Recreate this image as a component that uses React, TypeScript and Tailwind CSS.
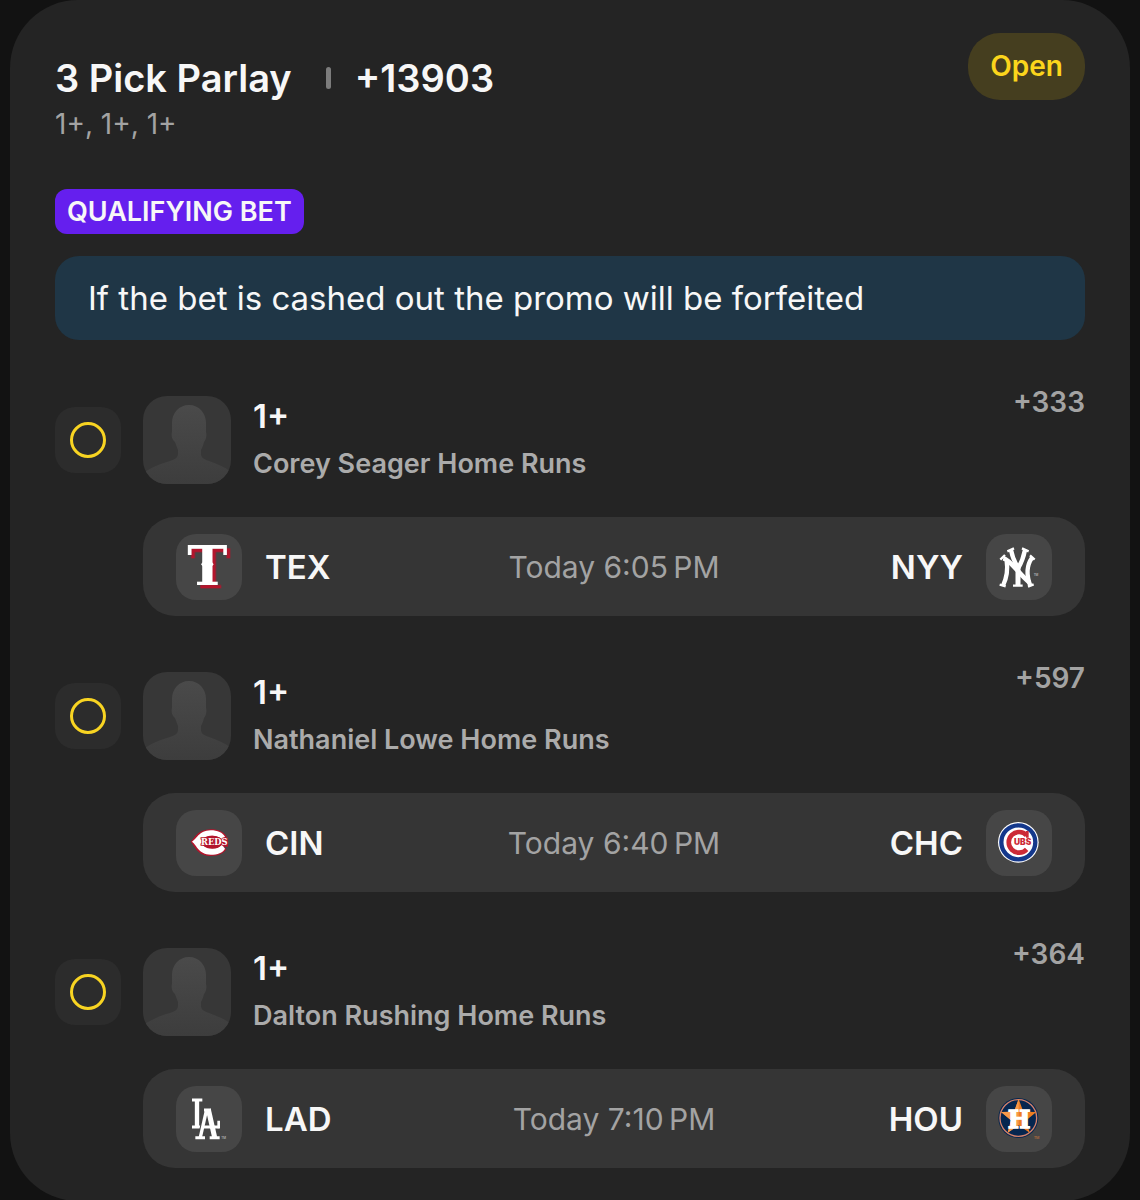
import type { ReactNode } from "react";

const serif = "DejaVu Serif, serif";

// each crest is drawn on a 198 unit tile
function Rangers() {
  return (
    <svg viewBox="19 25 198 198" className="h-full w-full" aria-label="Texas Rangers">
      <text
        x="113"
        y="178"
        fontFamily={serif}
        fontWeight="700"
        fontSize="162"
        textAnchor="middle"
        fill="#fff"
        className="drop-shadow-[10px_10px_0_#b3152c]"
      >
        T
      </text>
      <path d="M94 116l5-6h28l5 6-5 6H99z" fill="#fff" />
    </svg>
  );
}

function Yankees() {
  return (
    <svg viewBox="18 25 198 198" className="h-full w-full" aria-label="New York Yankees">
      <g fill="none" stroke="#fff" strokeWidth="13">
        <path d="M93 73q6 30 22 54q14-24 20-54" />
        <path d="M114 122v56" strokeWidth="15" />
        <path d="M70 98C92 104 118 146 148 170" strokeWidth="14" />
        <path d="M80 106q6 38-11 74" />
        <path d="M156 96q-24 34-5 84" />
      </g>
      <g fill="none" stroke="#fff" strokeWidth="7">
        <path d="M82 77l20-9M126 68l20 9" />
        <path d="M61 102l14-14M150 89l14 13" />
        <path d="M59 177l18 5M99 180h29M144 183l17-7" />
      </g>
      <text x="161" y="151" fontFamily="Inter, sans-serif" fontSize="9" fill="#ddd">TM</text>
    </svg>
  );
}

function Reds() {
  return (
    <svg viewBox="20 21 198 198" className="h-full w-full" aria-label="Cincinnati Reds">
      <path
        d="M64 116C78 104 84 80 124 79c24 0 40 8 48 22l-8 10h12v20h-12l7 8c-8 13-24 20-47 20-40-1-46-27-60-43z"
        fill="#b3152c"
      />
      <path
        d="M68 116c15-8 20-33 56-34 21 0 36 7 43 19l-9 11c-6-9-16-14-29-14-20 0-31 7-31 19s11 20 31 20c13 0 23-5 29-12l9 12c-7 12-22 18-43 18-36-1-41-28-56-39z"
        fill="#fff"
      />
      <ellipse cx="129" cy="117" rx="31" ry="19" fill="#b3152c" />
      <text
        x="135"
        y="127"
        fontFamily={serif}
        fontWeight="700"
        fontSize="25"
        textAnchor="middle"
        fill="#fff"
        stroke="#b3152c"
        strokeWidth="5"
        paintOrder="stroke"
      >
        REDS
      </text>
    </svg>
  );
}

function Cubs() {
  return (
    <svg viewBox="18 21 198 198" className="h-full w-full" aria-label="Chicago Cubs">
      <circle cx="115" cy="118" r="61" fill="#fff" />
      <circle cx="115" cy="118" r="51" fill="#fff" stroke="#14388c" strokeWidth="13" />
      <path d="M140 97a31 31 0 1 0 0 42" fill="none" stroke="#cc2a36" strokeWidth="14" />
      <path d="M138 84h8v20h-8z" fill="#cc2a36" />
      <rect x="99" y="106" width="56" height="24" fill="#fff" />
      <text x="128" y="127" fontFamily="Inter, sans-serif" fontWeight="900" fontSize="25" textAnchor="middle" fill="#cc2a36">
        UBS
      </text>
    </svg>
  );
}

function Dodgers() {
  return (
    <svg viewBox="19 20 198 198" className="h-full w-full" aria-label="Los Angeles Dodgers">
      <g fill="none" stroke="#fff">
        <path d="M82 60v82" strokeWidth="13" />
        <path d="M67 62h31M67 143h26" strokeWidth="9" />
      </g>
      {/* dark edge keeps the crossing strokes apart */}
      <g fill="none" stroke="#464646">
        <path d="M111 92L93 168" strokeWidth="16" />
        <path d="M116 92l18 76" strokeWidth="20" />
      </g>
      <g fill="none" stroke="#fff">
        <path d="M111 90L92 174" strokeWidth="10" />
        <path d="M116 90l19 84" strokeWidth="15" />
        <path d="M103 92h21" strokeWidth="9" />
        <path d="M98 143h52M77 175h29M120 175h30" strokeWidth="9" />
        <path d="M147 124v23" strokeWidth="8" />
      </g>
      <text x="155" y="178" fontFamily="Inter, sans-serif" fontSize="9" fill="#ddd">TM</text>
    </svg>
  );
}

function Astros() {
  return (
    <svg viewBox="18 20 198 198" className="h-full w-full" aria-label="Houston Astros">
      <circle cx="115" cy="116" r="60" fill="#06264f" />
      <circle cx="115" cy="116" r="55" fill="none" stroke="#d4816a" strokeWidth="4" />
      <path d="M116 59l14 38 39 1-30 25 10 37-33-22-33 22 10-37-30-25 39-1z" fill="#ee7d22" />
      <path d="M116 59v79l-33 22 10-37-30-25 39-1z" fill="#f79a4b" />
      <text
        x="117"
        y="147"
        fontFamily={serif}
        fontWeight="700"
        fontSize="72"
        textAnchor="middle"
        fill="#fff"
        stroke="#fff"
        strokeWidth="4"
      >
        H
      </text>
      <text x="161" y="178" fontFamily="Inter, sans-serif" fontSize="11" fill="#d97a3a">TM</text>
    </svg>
  );
}

function Avatar() {
  return (
    <svg viewBox="0 0 88 88" className="size-[88px] shrink-0 rounded-3xl bg-[#373737]" aria-hidden="true">
      <defs>
        <linearGradient id="person" x1="0" y1="0" x2="0" y2="1">
          <stop offset="0" stopColor="#4a4a4a" />
          <stop offset="1" stopColor="#3d3d3d" />
        </linearGradient>
      </defs>
      <path
        d="M46 9c10 0 17 8 17 18v9c1 3 0 8-2 10-1 4-2 6-3 8v4c0 3 2 5 8 7 8 3 16 6 22 11v12H0V77c8-5 16-9 27-12 6-2 8-4 8-7v-4l-3-8c-3-2-4-7-3-10v-9c0-10 7-18 17-18z"
        fill="url(#person)"
      />
    </svg>
  );
}

type Leg = {
  player: string;
  odds: string;
  time: string;
  away: string;
  awayLogo: ReactNode;
  home: string;
  homeLogo: ReactNode;
};

// narrow no-break space before PM
const legs: Leg[] = [
  {
    player: "Corey Seager",
    odds: "+333",
    time: "Today 6:05\u202fPM",
    away: "TEX",
    awayLogo: <Rangers />,
    home: "NYY",
    homeLogo: <Yankees />,
  },
  {
    player: "Nathaniel Lowe",
    odds: "+597",
    time: "Today 6:40\u202fPM",
    away: "CIN",
    awayLogo: <Reds />,
    home: "CHC",
    homeLogo: <Cubs />,
  },
  {
    player: "Dalton Rushing",
    odds: "+364",
    time: "Today 7:10\u202fPM",
    away: "LAD",
    awayLogo: <Dodgers />,
    home: "HOU",
    homeLogo: <Astros />,
  },
];

function TeamTile({ children }: { children: ReactNode }) {
  return <div className="size-[66px] shrink-0 overflow-hidden rounded-[20px] bg-[#464646]">{children}</div>;
}

function LegRow({ leg }: { leg: Leg }) {
  return (
    <li>
      <div className="flex items-center">
        <div className="flex size-[66px] shrink-0 items-center justify-center rounded-[20px] bg-[#2c2c2c]">
          <span className="size-9 rounded-full border-[3px] border-[#f8d422]"></span>
        </div>

        <div className="ml-[22px]">
          <Avatar />
        </div>

        <div className="ml-[22px] flex-1">
          <h2 className="text-[33px] leading-10 font-semibold text-[#f7f7f7]">1+</h2>
          <p className="mt-2 text-[27px] leading-10 font-semibold text-[#ababab]">{leg.player} Home Runs</p>
        </div>

        <p className="self-start text-[28px] leading-3 font-semibold text-[#a3a3a3]">{leg.odds}</p>
      </div>

      <div className="mt-[33px] ml-[88px] grid grid-cols-[1fr_auto_1fr] items-center rounded-[32px] bg-[#353535] px-[33px] pt-[17px] pb-4">
        <div className="flex items-center gap-[23px]">
          <TeamTile>{leg.awayLogo}</TeamTile>
          <span className="text-[33px] leading-10 font-semibold">{leg.away}</span>
        </div>
        <time className="text-[30px] leading-10 text-[#a3a3a3]">{leg.time}</time>
        <div className="flex items-center justify-end gap-[23px]">
          <span className="text-[33px] leading-10 font-semibold">{leg.home}</span>
          <TeamTile>{leg.homeLogo}</TeamTile>
        </div>
      </div>
    </li>
  );
}

export default function App() {
  return (
    <main className="min-h-screen bg-[#121212] px-[10px] font-[Inter,sans-serif] text-[#f7f7f7]">
      <section className="rounded-[68px] bg-[#242424] px-[45px] py-[33px]">
        <header className="flex items-start justify-between">
          <div className="pt-[21px]">
            <div className="flex items-center">
              <h1 className="text-[38px] leading-[48px] font-semibold">3 Pick Parlay</h1>
              <span className="mr-6 ml-[34px] h-[22px] w-[5px] rounded-sm bg-[#7c7c7c]"></span>
              <span className="text-[38px] leading-[48px] font-semibold">+13903</span>
            </div>
            <p className="mt-[6px] text-[28px] leading-8 text-[#a3a3a3]">1+, 1+, 1+</p>
          </div>
          <span className="rounded-[32px] bg-[#453e1f] px-[22px] text-[28px] leading-[67px] font-semibold text-[#fbd51c]">
            Open
          </span>
        </header>

        <p className="mt-[49px] w-fit rounded-xl bg-[#651fee] px-3 text-[27px] leading-[45px] font-semibold">
          QUALIFYING BET
        </p>
        <p className="mt-[22px] rounded-3xl bg-[#1f3646] px-[33px] text-[33px] leading-[84px]">
          If the bet is cashed out the promo will be forfeited
        </p>

        <ul className="mt-14 flex flex-col gap-14">
          {legs.map((leg) => (
            <LegRow key={leg.player} leg={leg} />
          ))}
        </ul>
      </section>
    </main>
  );
}
